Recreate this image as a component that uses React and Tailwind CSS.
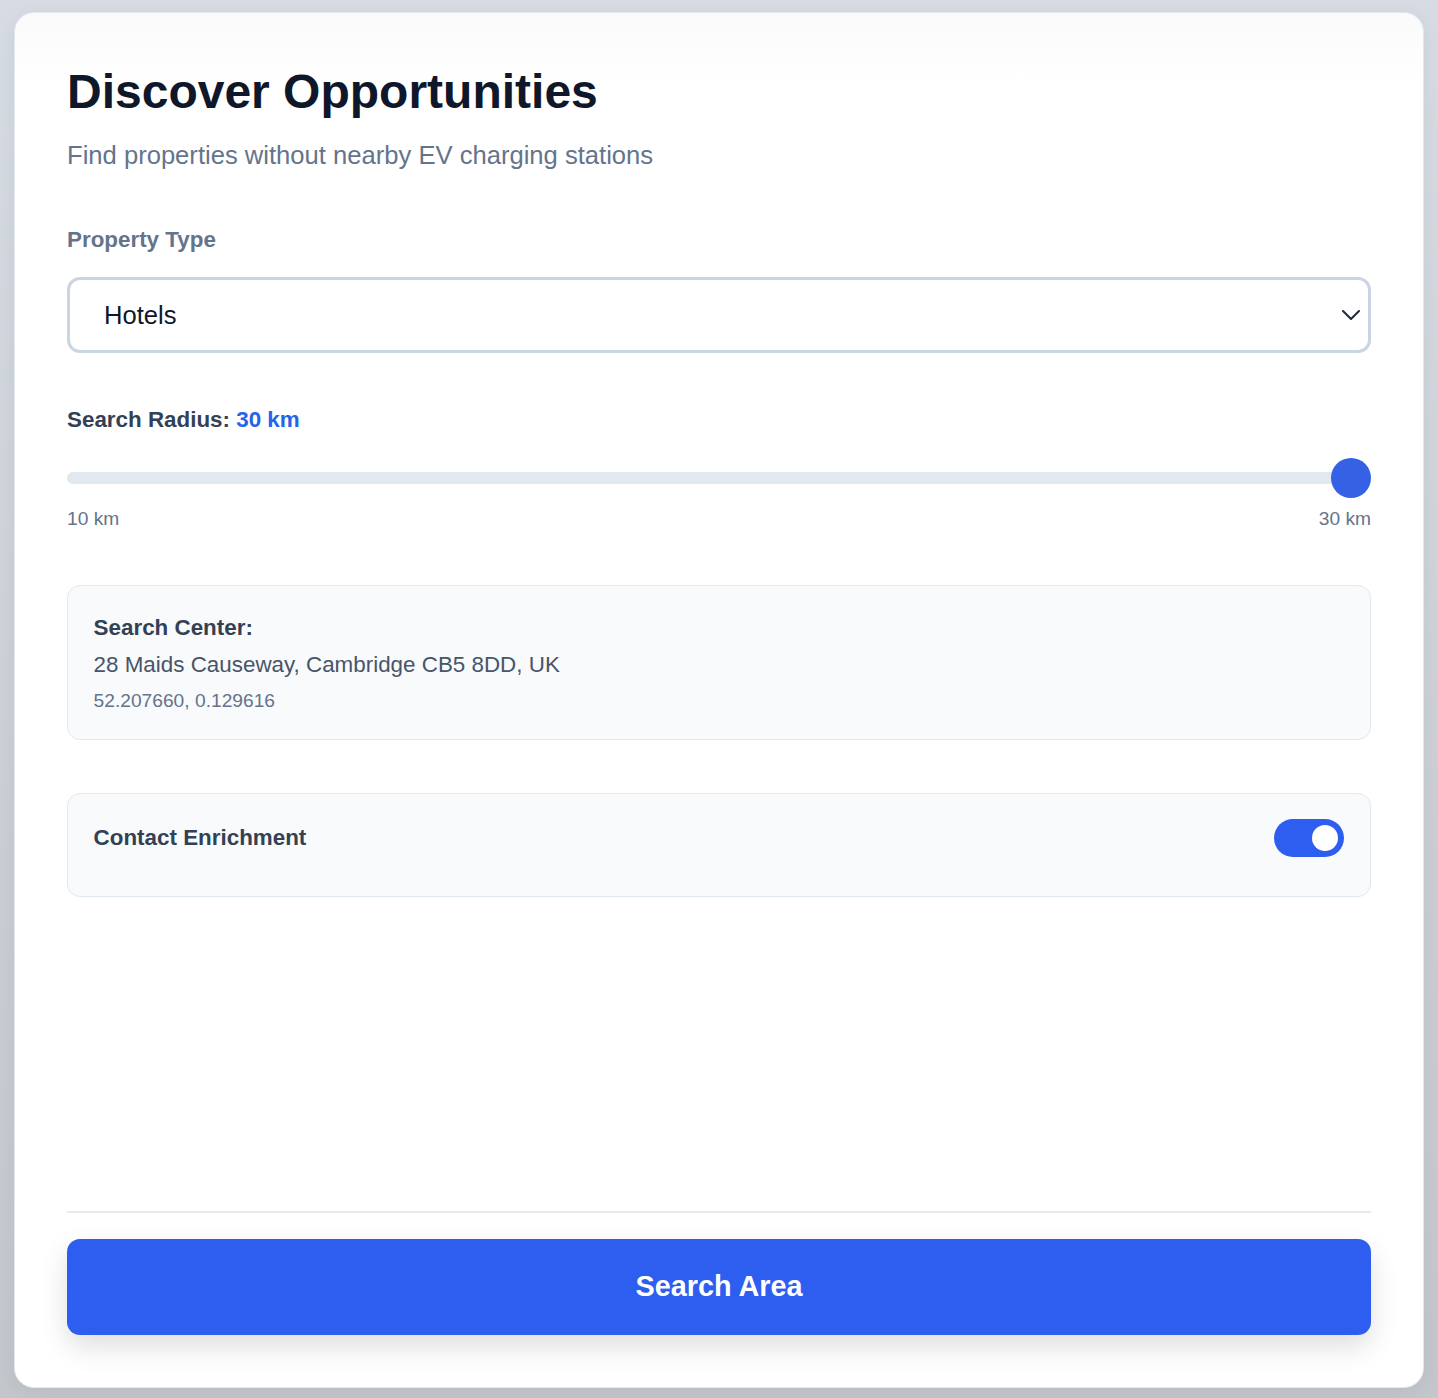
export default function App() {
  return (
    <div className="min-h-[1398px] w-full bg-gradient-to-b from-[#d7dce4] to-[#c3c6cb] pl-[14px] pr-[14px] pt-[12px] font-['Liberation_Sans',Arial,sans-serif]">
      <div className="flex h-[1376px] w-[1410px] flex-col rounded-[20px] border border-[#e2e8f0] bg-gradient-to-b from-[#fafafa] to-white to-[5%] px-[52px] pb-[52px] pt-[50px] shadow-[0_4px_20px_rgba(0,0,0,0.06)]">
        <h1 className="text-[48px] font-bold leading-[57.6px] text-[#0f172a]">Discover Opportunities</h1>
        <p className="mt-[15px] text-[25.6px] leading-[38.4px] text-[#64748b]">
          Find properties without nearby EV charging stations
        </p>

        <label className="mt-[50px] text-[22.4px] font-bold leading-[32px] text-[#64748b]">Property Type</label>
        <div className="mt-[21px] flex h-[76px] items-center justify-between rounded-[13px] border-[3px] border-[#cbd5e1] bg-white pl-[34px] pr-[7px]">
          <span className="text-[25.6px] text-[#0f172a]">Hotels</span>
          <svg width="18" height="10" viewBox="0 0 18 10" fill="none" className="mr-[1px]">
            <path d="M1 1l8 8 8-8" stroke="#1e293b" strokeWidth="2" strokeLinecap="round" strokeLinejoin="round" />
          </svg>
        </div>

        <div className="mt-[51px] text-[22.4px] font-bold leading-[32px] text-[#334155]">
          Search Radius: <span className="text-[#2563eb]">30 km</span>
        </div>
        <div className="relative mt-[22px] flex h-[40px] items-center">
          <div className="h-[12px] w-full rounded-full bg-[#e2e8f0]" />
          <div className="absolute right-0 top-0 h-[40px] w-[40px] rounded-full bg-[#3562e4]" />
        </div>
        <div className="mt-[8px] flex justify-between text-[19.2px] leading-[26px] text-[#64748b]">
          <span>10 km</span>
          <span>30 km</span>
        </div>

        <div className="mt-[53px] rounded-[13px] border-[1.6px] border-[#e2e8f0] bg-[#f8fafc] p-[25.6px]">
          <div className="text-[22.4px] font-bold leading-[32px] text-[#334155]">Search Center:</div>
          <div className="mt-[5px] text-[22.4px] leading-[32px] text-[#475569]">28 Maids Causeway, Cambridge CB5 8DD, UK</div>
          <div className="mt-[7px] text-[19.2px] leading-[25.6px] text-[#64748b]">52.207660, 0.129616</div>
        </div>

        <div className="mt-[53px] flex h-[104px] items-start justify-between rounded-[13px] border-[1.6px] border-[#e2e8f0] bg-[#f8fafc] px-[25.6px] pt-[25.6px]">
          <div className="mt-[3px] text-[22.4px] font-bold leading-[32px] text-[#334155]">Contact Enrichment</div>
          <div className="flex h-[38px] w-[70px] items-center justify-end rounded-full bg-[#2d5ef0] pr-[6px]">
            <div className="h-[26px] w-[26px] rounded-full bg-white" />
          </div>
        </div>

        <div className="flex-1" />

        <div className="h-[2px] w-full bg-[#e5e9f0]" />
        <button className="mt-[26px] flex h-[96px] w-full items-center justify-center rounded-[13px] bg-[#2d5ef0] text-[28.8px] font-bold text-white shadow-[0_12px_28px_rgba(0,0,0,0.13)]">
          Search Area
        </button>
      </div>
    </div>
  );
}
